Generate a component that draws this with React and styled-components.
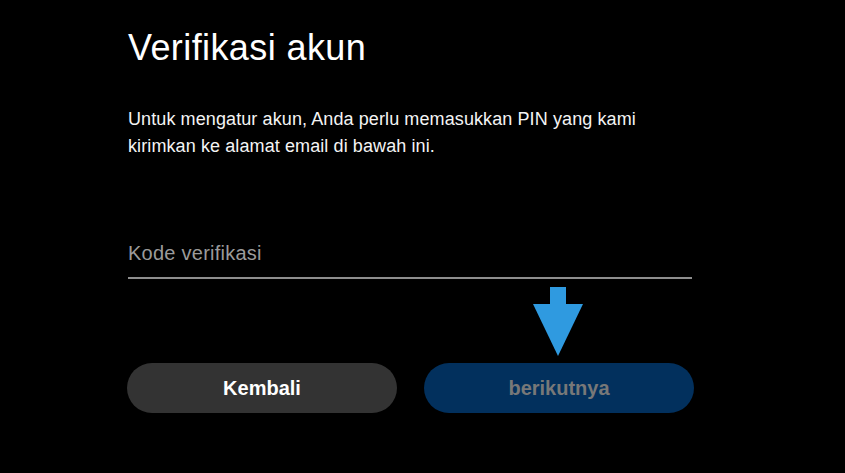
import React from 'react';
import styled, { createGlobalStyle } from 'styled-components';

const GlobalStyle = createGlobalStyle`
	html,
	body {
		margin: 0;
		padding: 0;
		background: #000;
	}
	body {
		font-family: 'Liberation Sans', Arial, sans-serif;
		color: #fff;
	}
`;

const Page = styled.div`
	width: 845px;
	height: 473px;
	background: #000;
	overflow: hidden;
`;

const Panel = styled.div`
	display: flex;
	flex-direction: column;
	width: 567px;
	padding: 27px 0 0 127px;
`;

const Title = styled.h1`
	margin: 0 0 0 1px;
	font-size: 36px;
	font-weight: 400;
	letter-spacing: 0.4px;
	line-height: 1.15;
	color: #fff;
`;

const Intro = styled.p`
	margin: 38px 0 0 1px;
	width: 564px;
	font-size: 18px;
	letter-spacing: 0.1px;
	line-height: 27px;
	color: #f4f4f4;
`;

const Field = styled.label`
	display: block;
	margin: 81px 0 0 1px;
	width: 564px;
	border-bottom: 2px solid #8e8e8e;
	padding-bottom: 12px;
`;

const Input = styled.input`
	display: block;
	width: 100%;
	padding: 0;
	border: 0;
	outline: none;
	background: transparent;
	font-family: inherit;
	font-size: 20px;
	letter-spacing: 0.25px;
	line-height: 24px;
	height: 24px;
	color: #fff;

	&::placeholder {
		color: #9b9b9b;
	}
`;

const Actions = styled.div`
	display: grid;
	grid-template-columns: 270px 270px;
	gap: 27px;
	margin-top: 84px;
`;

const Button = styled.button`
	position: relative;
	height: 50px;
	border: 0;
	border-radius: 25px;
	font-family: inherit;
	font-size: 20px;
	font-weight: 700;
	background: ${props => (props.primary ? '#02305d' : '#333333')};
	color: ${props => (props.primary ? '#787878' : '#ffffff')};
	cursor: pointer;
`;

const Pointer = styled.svg`
	position: absolute;
	left: 109px;
	top: -76px;
	pointer-events: none;
`;

const DownArrow = () => (
	<Pointer width="50" height="69" viewBox="0 0 50 69">
		<rect x="17" y="0" width="16" height="18" fill="#2f9ae0" />
		<polygon points="0,17 50,17 25,69" fill="#2f9ae0" />
	</Pointer>
);

export default function App() {
	return (
		<Page>
			<GlobalStyle />
			<Panel>
				<Title>Verifikasi akun</Title>
				<Intro>
					Untuk mengatur akun, Anda perlu memasukkan PIN yang kami kirimkan ke alamat
					email di bawah ini.
				</Intro>
				<Field>
					<Input type="text" placeholder="Kode verifikasi" />
				</Field>
				<Actions>
					<Button>Kembali</Button>
					<Button primary>
						berikutnya
						<DownArrow />
					</Button>
				</Actions>
			</Panel>
		</Page>
	);
}
